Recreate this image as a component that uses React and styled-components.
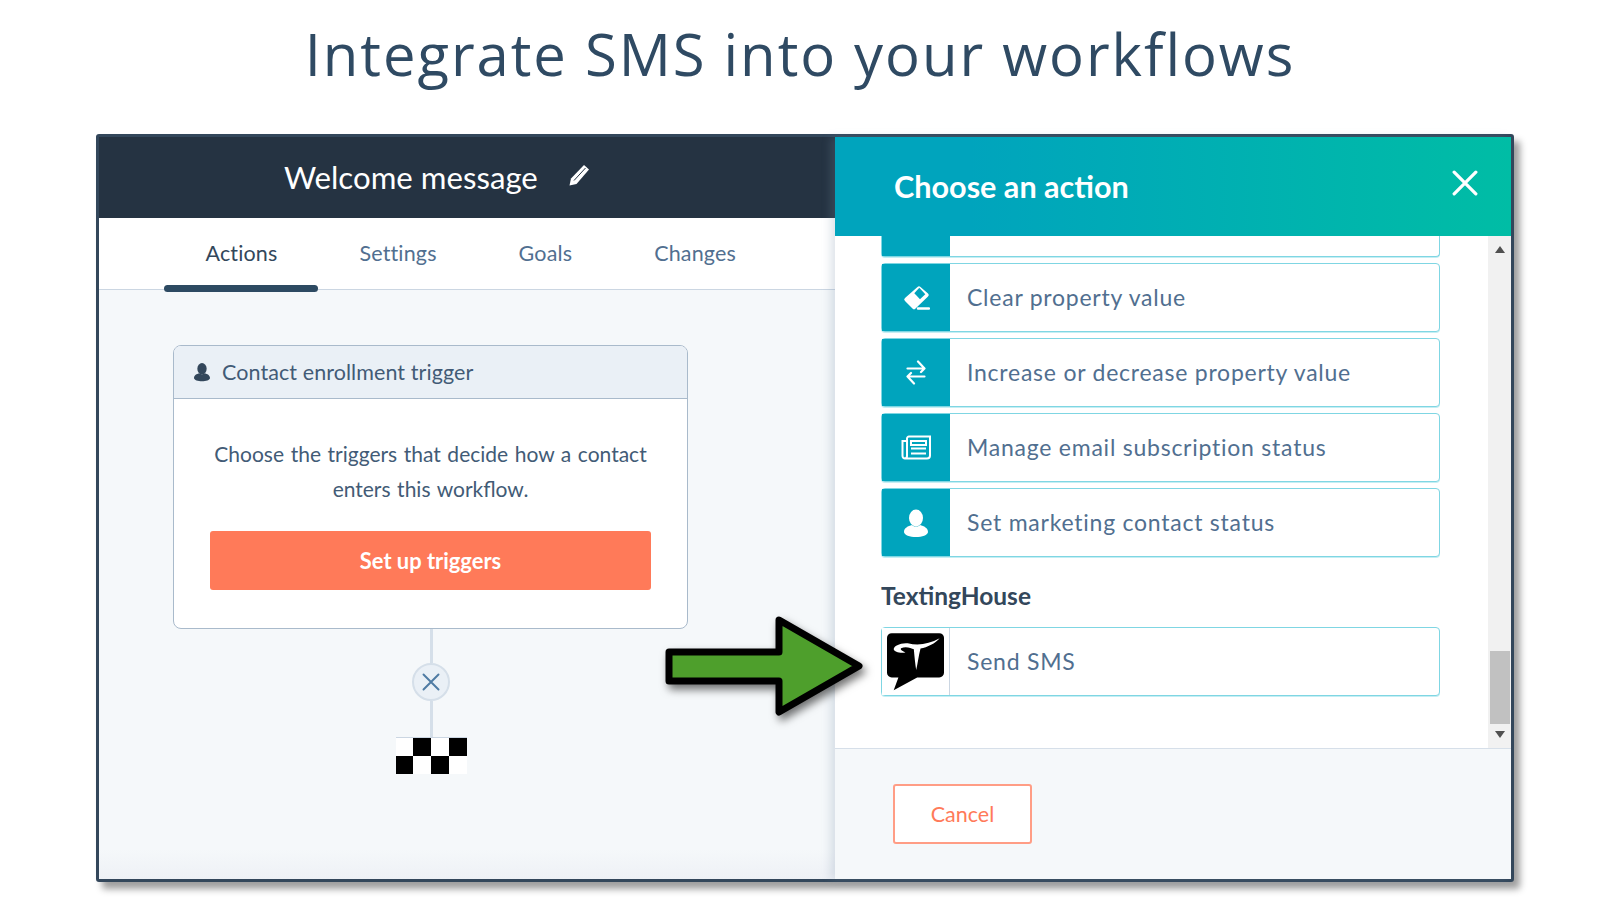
import styled, { createGlobalStyle } from 'styled-components';

const GlobalStyle = createGlobalStyle`
  html, body {
    margin: 0;
    padding: 0;
    background: #fff;
    font-family: Lato, "Open Sans", sans-serif;
  }
  * {
    box-sizing: border-box;
  }
`;

const Page = styled.div`
  width: 1600px;
  height: 900px;
  overflow: hidden;
  position: relative;
`;

const Title = styled.h1`
  margin: 0;
  height: 134px;
  padding-top: 14px;
  text-align: center;
  font-family: "Open Sans", sans-serif;
  font-weight: 400;
  font-size: 58px;
  line-height: 80px;
  letter-spacing: 1.95px;
  color: #2f4a63;
`;

const Window = styled.div`
  margin-left: 96px;
  width: 1418px;
  height: 748px;
  display: flex;
  border: 3px solid #33475b;
  border-radius: 3px;
  box-shadow: 6px 7px 7px rgba(0, 0, 0, 0.38);
  background: #f5f8fa;
`;

const LeftColumn = styled.section`
  width: 736px;
  background: linear-gradient(to bottom, #f5f8fa 96%, #eef1f6 100%);
`;

const TopBar = styled.header`
  height: 81px;
  background: #253342;
  display: flex;
  align-items: center;
  gap: 30px;
  padding-left: 185px;
  color: #fff;
  font-size: 31.2px;
  span {
    margin-top: -2px;
  }
  svg {
    margin-top: -6px;
  }
`;

const Tabs = styled.nav`
  height: 72px;
  background: #fff;
  border-bottom: 1px solid #cbd6e2;
  display: flex;
  padding-left: 65.5px;
`;

const Tab = styled.div`
  position: relative;
  padding: 23px 41px 0;
  font-size: 21.5px;
  line-height: 24px;
  letter-spacing: 0.15px;
  color: ${p => (p.$active ? '#33475b' : '#516f90')};
  &::after {
    content: '';
    display: ${p => (p.$active ? 'block' : 'none')};
    position: absolute;
    left: -0.5px;
    right: 0;
    bottom: -3px;
    height: 7px;
    border-radius: 4px;
    background: #2d4a62;
  }
`;

const Flow = styled.div`
  margin: 55px 0 0 74px;
  width: 515px;
  display: flex;
  flex-direction: column;
  align-items: center;
`;

const TriggerCard = styled.article`
  width: 100%;
  height: 284px;
  background: #fff;
  border: 1px solid #a9bacb;
  border-radius: 8px;
  overflow: hidden;
`;

const CardHead = styled.div`
  height: 53px;
  display: flex;
  align-items: center;
  gap: 12px;
  padding-left: 20px;
  background: #eaf0f6;
  border-bottom: 1px solid #a9bacb;
  color: #425b76;
  font-size: 21.5px;
  letter-spacing: 0.08px;
`;

const CardBody = styled.div`
  padding: 37px 36px 0;
  text-align: center;
  p {
    margin: 0;
    font-size: 21px;
    word-spacing: 1.2px;
    line-height: 35px;
    color: #425b76;
  }
`;

const TriggerButton = styled.button`
  display: block;
  width: 100%;
  height: 59px;
  margin-top: 25px;
  padding-bottom: 2px;
  border: none;
  border-radius: 3px;
  background: #ff7a59;
  color: #fff;
  font-family: inherit;
  font-weight: 700;
  font-size: 21.9px;
`;

const Line = styled.div`
  width: 3px;
  height: ${p => p.$h}px;
  margin-left: 1px;
  background: #d5dfe9;
`;

const Circle = styled.div`
  width: 38px;
  height: 38px;
  margin-left: 1px;
  border-radius: 50%;
  border: 2px solid #d5dfe9;
  background: #eaf0f6;
  display: flex;
  align-items: center;
  justify-content: center;
`;

const Checker = styled.div`
  width: 71px;
  height: 37px;
  margin-left: 1px;
  display: grid;
  grid-template-columns: repeat(4, 1fr);
  grid-template-rows: repeat(2, 1fr);
  border-top: 1px solid #cbd6e2;
`;

const Square = styled.div`
  background: ${p => (p.$dark ? '#000' : '#fff')};
`;

const Panel = styled.aside`
  width: 676px;
  display: flex;
  flex-direction: column;
  background: #fff;
  position: relative;
  box-shadow: -5px 0 8px rgba(120, 140, 170, 0.22);
`;

const PanelHead = styled.header`
  height: 99px;
  flex: none;
  display: flex;
  align-items: center;
  justify-content: space-between;
  padding: 0 33px 0 59px;
  background: linear-gradient(to right, #00a4bd 20%, #00bda5 100%);
  color: #fff;
  font-size: 30.6px;
  font-weight: 700;
  svg {
    margin-top: -8px;
  }
`;

const ScrollArea = styled.div`
  height: 513px;
  flex: none;
  display: flex;
  border-bottom: 1px solid #d6dfe9;
`;

const ActionList = styled.div`
  width: 653px;
  padding: 0 48px 0 46px;
  display: flex;
  flex-direction: column;
  gap: 6px;
`;

const ActionRow = styled.div`
  height: ${p => (p.$cut ? '21px' : '69px')};
  flex: none;
  display: flex;
  align-items: center;
  background: #fff;
  border: 1px solid #7fd6e3;
  border-top-width: ${p => (p.$cut ? 0 : 1)}px;
  border-radius: ${p => (p.$cut ? '0 0 4px 4px' : '4px')};
  box-shadow: 0 1px 0 #c5eef3;
  font-size: 23px;
  letter-spacing: 0.76px;
  color: #516f90;
`;

const ActionIcon = styled.div`
  width: 68px;
  height: 100%;
  flex: none;
  display: flex;
  align-items: center;
  justify-content: center;
  background: ${p => (p.$plain ? '#fff' : '#00a4bd')};
  border-right: ${p => (p.$plain ? '1px solid #cbd6e2' : 'none')};
`;

const ActionLabel = styled.span`
  margin-top: -2px;
  padding-left: 17px;
`;

const GroupTitle = styled.h3`
  margin: 17px 0 9px;
  font-size: 24.5px;
  line-height: 32px;
  font-weight: 700;
  color: #33475b;
`;

const Scrollbar = styled.div`
  width: 23px;
  display: flex;
  flex-direction: column;
  align-items: center;
  background: #f1f1f1;
`;

const ScrollUp = styled.div`
  margin-top: 10px;
  border: 5.5px solid transparent;
  border-top: none;
  border-bottom: 7px solid #505050;
`;

const ScrollThumb = styled.div`
  margin-top: auto;
  width: 20px;
  height: 73px;
  background: #c1c1c1;
`;

const ScrollDown = styled.div`
  margin: 7px 0 10px;
  border: 5.5px solid transparent;
  border-bottom: none;
  border-top: 7px solid #505050;
`;

const PanelFoot = styled.footer`
  flex: 1;
  background: #f5f8fa;
  padding: 35px 0 0 58px;
`;

const CancelButton = styled.button`
  width: 139px;
  height: 60px;
  background: #fff;
  border: 2px solid #ff9d85;
  border-radius: 3px;
  color: #ff7a59;
  font-family: inherit;
  font-size: 21.5px;
`;

const ArrowOverlay = styled.svg`
  position: absolute;
  left: 655px;
  top: 605px;
  filter: drop-shadow(3px 5px 4px rgba(0, 0, 0, 0.55));
`;

const PencilIcon = () => (
  <svg width="22" height="22" viewBox="0 0 22 22">
    <path d="M16 1l5 4.500L8.500 20 1.500 21.500 3 14.500z" fill="#fff" />
    <path d="M6 16.500L17.500 4" stroke="#253342" strokeWidth="1" />
  </svg>
);

const CloseIcon = ({ size, color, width }) => (
  <svg width={size} height={size} viewBox="0 0 24 24">
    <path d="M2 2L22 22M22 2L2 22" stroke={color} strokeWidth={width} strokeLinecap="round" />
  </svg>
);

const UserIcon = ({ w, h, color }) => (
  <svg width={w} height={h} viewBox="0 0 24 28">
    <ellipse cx="12" cy="9" rx="7" ry="8.500" fill={color} />
    <path d="M8 16c-4 1-8 3-8 7 0 3 6 5 12 5s12-2 12-5c0-4-4-6-8-7-2 2-6 2-8 0z" fill={color} />
  </svg>
);

const EraserIcon = () => (
  <svg width="28" height="28" viewBox="0 0 28 28">
    <path d="M15.500 3a2 2 0 0 1 3 0l7.500 6.500a2 2 0 0 1 0 3L13.500 24.500a2 2 0 0 1-3 0L3 17a2 2 0 0 1 0-3z" fill="#fff" />
    <path d="M12.300 9.300l5-5.600 6 6.600-5.300 5z" fill="#00a4bd" />
    <path d="M16 24.500h11" stroke="#fff" strokeWidth="2.400" strokeLinecap="round" />
  </svg>
);

const SwapIcon = () => (
  <svg width="20" height="25" viewBox="0 0 20 25" fill="none" stroke="#fff" strokeWidth="2.200" strokeLinecap="round" strokeLinejoin="round">
    <path d="M1.500 8.500H18.500M12 1.500L18.500 8.500 15 12" />
    <path d="M18.500 16.500H1.500M8 23.500L1.500 16.500 5 13" />
  </svg>
);

const NewsIcon = () => (
  <svg width="30" height="25" viewBox="0 0 30 25" fill="none" stroke="#fff" strokeWidth="2">
    <path d="M6 6H1.500v15a2.500 2.500 0 0 0 2.500 2.500h22a3 3 0 0 0 3-3V1.500H8a2 2 0 0 0-2 2V21a2.500 2.500 0 0 1-2 2.500" />
    <path d="M10 6h15v4H10zM10 13.500h15M10 18.500h15" />
  </svg>
);

const TextingLogo = () => (
  <svg width="57" height="58" viewBox="0 0 170 172">
    <path d="M14 0h142a14 14 0 0 1 14 14v104a14 14 0 0 1-14 14H90L20 170l14-38H14a14 14 0 0 1-14-14V14A14 14 0 0 1 14 0z" fill="#000" />
    <path d="M157 15C125 32 95 38 62 30 40 28 20 38 20 48c2 8 16 12 35 10-7-4-17-8-13-13 13-7 30-1 38 3 2 22 4 42 7 62 5-20 7-42 13-64 20-4 45-16 57-31z" fill="#fff" />
  </svg>
);

const actions = [
  { label: 'Clear property value', icon: <EraserIcon /> },
  { label: 'Increase or decrease property value', icon: <SwapIcon /> },
  { label: 'Manage email subscription status', icon: <NewsIcon /> },
  { label: 'Set marketing contact status', icon: <UserIcon w={24} h={28} color="#fff" /> },
];

const tabs = ['Actions', 'Settings', 'Goals', 'Changes'];
const squares = [false, true, false, true, true, false, true, false];

export default function App() {
  return (
    <Page>
      <GlobalStyle />
      <Title>Integrate SMS into your workflows</Title>
      <Window>
        <LeftColumn>
          <TopBar>
            <span>Welcome message</span>
            <PencilIcon />
          </TopBar>
          <Tabs>
            {tabs.map((t, i) => (
              <Tab key={t} $active={i === 0}>{t}</Tab>
            ))}
          </Tabs>
          <Flow>
            <TriggerCard>
              <CardHead>
                <UserIcon w={16} h={20} color="#33475b" />
                <span>Contact enrollment trigger</span>
              </CardHead>
              <CardBody>
                <p>Choose the triggers that decide how a contact enters this workflow.</p>
                <TriggerButton>Set up triggers</TriggerButton>
              </CardBody>
            </TriggerCard>
            <Line $h={34} />
            <Circle>
              <CloseIcon size={18} color="#4f7ba3" width={2.6} />
            </Circle>
            <Line $h={36} />
            <Checker>
              {squares.map((dark, i) => (
                <Square key={i} $dark={dark} />
              ))}
            </Checker>
          </Flow>
        </LeftColumn>
        <Panel>
          <PanelHead>
            <span>Choose an action</span>
            <CloseIcon size={26} color="#fff" width={3} />
          </PanelHead>
          <ScrollArea>
            <ActionList>
              <ActionRow $cut>
                <ActionIcon />
              </ActionRow>
              {actions.map(a => (
                <ActionRow key={a.label}>
                  <ActionIcon>{a.icon}</ActionIcon>
                  <ActionLabel>{a.label}</ActionLabel>
                </ActionRow>
              ))}
              <GroupTitle>TextingHouse</GroupTitle>
              <ActionRow>
                <ActionIcon $plain>
                  <TextingLogo />
                </ActionIcon>
                <ActionLabel>Send SMS</ActionLabel>
              </ActionRow>
            </ActionList>
            <Scrollbar>
              <ScrollUp />
              <ScrollThumb />
              <ScrollDown />
            </Scrollbar>
          </ScrollArea>
          <PanelFoot>
            <CancelButton>Cancel</CancelButton>
          </PanelFoot>
        </Panel>
      </Window>
      <ArrowOverlay width="230" height="130" viewBox="0 0 230 130">
        <path d="M14 47H124V15L204 61 124 107V76H14z" fill="#4e9f2c" stroke="#000" strokeWidth="7" strokeLinejoin="round" />
      </ArrowOverlay>
    </Page>
  );
}
